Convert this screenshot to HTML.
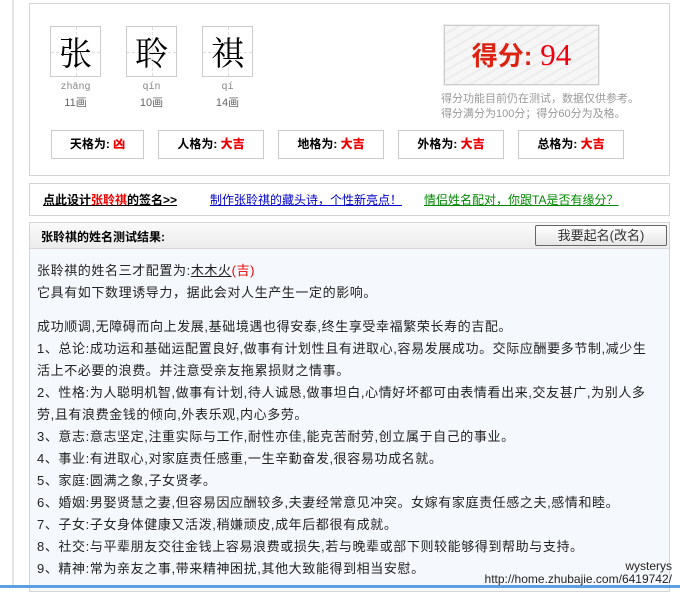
<!DOCTYPE html>
<html><head><meta charset="utf-8"><style>
*{margin:0;padding:0;box-sizing:border-box}
body{width:680px;height:588px;background:#fff;position:relative;overflow:hidden;font-family:"Liberation Sans","Noto Sans CJK SC",sans-serif;font-size:12px;color:#000}
.a{position:absolute}
.vl{left:12px;top:0;width:2px;height:588px;background:#e4e4e4}
.p{border:1px solid #d4d4d4;background:#fff}
.ch{width:51px;height:51px;border:1px solid #ccc;background:#fff;font-size:33px;line-height:49px;text-align:center;font-family:"Noto Serif CJK SC",serif;color:#000}
.ch:before{content:"";position:absolute;left:0;right:0;top:25px;border-top:1px dashed #ddd}
.ch:after{content:"";position:absolute;top:0;bottom:0;left:25px;border-left:1px dashed #ddd}
.ch span{position:relative;z-index:1}
.py{width:51px;text-align:center;color:#888;font-size:10px;font-family:"Liberation Mono",monospace}
.hu{width:51px;text-align:center;color:#666;font-size:11px}
.g{height:29px;border:1px solid #ccc;background:#fff;text-align:center;font-weight:bold;line-height:27px;font-size:12px}
.g b{color:#e00}
.ln{font-size:12px;text-decoration:underline}
.txt{font-size:13px;line-height:22px;color:#222;left:37px;width:625px;letter-spacing:0.6px}
</style></head><body>
<div class="a vl"></div>
<div class="a p" style="left:29px;top:3px;width:641px;height:173px"></div>
<div class="a ch" style="left:50px;top:26px"><span>张</span></div>
<div class="a ch" style="left:126px;top:26px"><span>聆</span></div>
<div class="a ch" style="left:202px;top:26px"><span>祺</span></div>
<div class="a py" style="left:50px;top:82px">zhāng</div>
<div class="a py" style="left:126px;top:82px">qín</div>
<div class="a py" style="left:202px;top:82px">qí</div>
<div class="a hu" style="left:50px;top:94px">11画</div>
<div class="a hu" style="left:126px;top:94px">10画</div>
<div class="a hu" style="left:202px;top:94px">14画</div>
<div class="a" style="left:444px;top:25px;width:155px;height:60px;border:1px solid #ccc;background:repeating-linear-gradient(150deg,#f6f6f6 0 6px,#ececec 6px 8px);box-shadow:0 0 0 1px #eee;text-align:center;line-height:58px"><span style="color:#d21;font-size:26px;font-weight:bold">得分:</span><span style="color:#e01;font-size:31px;font-family:'Liberation Serif',serif"> 94</span></div>
<div class="a" style="left:441px;top:92px;color:#999;font-size:11px;line-height:15px;white-space:nowrap">得分功能目前仍在测试，数据仅供参考。<br>得分满分为100分；得分60分为及格。</div>
<div class="a g" style="left:51px;top:130px;width:93px">天格为: <b>凶</b></div>
<div class="a g" style="left:158px;top:130px;width:106px">人格为: <b>大吉</b></div>
<div class="a g" style="left:278px;top:130px;width:106px">地格为: <b>大吉</b></div>
<div class="a g" style="left:398px;top:130px;width:106px">外格为: <b>大吉</b></div>
<div class="a g" style="left:518px;top:130px;width:106px">总格为: <b>大吉</b></div>

<div class="a p" style="left:29px;top:183px;width:641px;height:33px"></div>
<div class="a ln" style="left:43px;top:191px;font-weight:bold;color:#000">点此设计<span style="color:#e00">张聆祺</span>的签名&gt;&gt;</div>
<div class="a ln" style="left:210px;top:191px;color:#00c">制作张聆祺的藏头诗，个性新亮点！</div>
<div class="a ln" style="left:424px;top:191px;color:#080">情侣姓名配对，你跟TA是否有缘分？</div>

<div class="a" style="left:29px;top:222px;width:641px;height:370px;border:1px solid #d4d4d4;background:#f5f8fc"></div>
<div class="a" style="left:30px;top:223px;width:639px;height:26px;background:linear-gradient(#fafafa,#ececec);border-bottom:1px solid #d8d8d8"></div>
<div class="a" style="left:41px;top:228px;font-weight:bold;font-size:12px">张聆祺的姓名测试结果:</div>
<div class="a" style="left:535px;top:225px;width:132px;height:21px;border:1px solid #666;border-radius:2px;background:linear-gradient(#fff,#e6e6e6);text-align:center;line-height:19px;font-size:13px;color:#333">我要起名(改名)</div>
<div class="a txt" style="top:260px">张聆祺的姓名三才配置为:<u>木木火</u><span style="color:#e00">(吉)</span><br>它具有如下数理诱导力，据此会对人生产生一定的影响。</div>
<div class="a txt" style="top:316px">成功顺调,无障碍而向上发展,基础境遇也得安泰,终生享受幸福繁荣长寿的吉配。<br>1、总论:成功运和基础运配置良好,做事有计划性且有进取心,容易发展成功。交际应酬要多节制,减少生<br>活上不必要的浪费。并注意受亲友拖累损财之情事。<br>2、性格:为人聪明机智,做事有计划,待人诚恳,做事坦白,心情好坏都可由表情看出来,交友甚广,为别人多<br>劳,且有浪费金钱的倾向,外表乐观,内心多劳。<br>3、意志:意志坚定,注重实际与工作,耐性亦佳,能克苦耐劳,创立属于自己的事业。<br>4、事业:有进取心,对家庭责任感重,一生辛勤奋发,很容易功成名就。<br>5、家庭:圆满之象,子女贤孝。<br>6、婚姻:男娶贤慧之妻,但容易因应酬较多,夫妻经常意见冲突。女嫁有家庭责任感之夫,感情和睦。<br>7、子女:子女身体健康又活泼,稍嫌顽皮,成年后都很有成就。<br>8、社交:与平辈朋友交往金钱上容易浪费或损失,若与晚辈或部下则较能够得到帮助与支持。<br>9、精神:常为亲友之事,带来精神困扰,其他大致能得到相当安慰。</div>
<div class="a" style="left:0;top:585px;width:680px;height:3px;background:#5aa0e0"></div>
<div class="a" style="right:8px;top:560px;text-align:right;font-size:12px;line-height:13px;color:#222;text-shadow:0 0 2px #fff">wysterys<br>http://home.zhubajie.com/6419742/</div>
</body></html>
